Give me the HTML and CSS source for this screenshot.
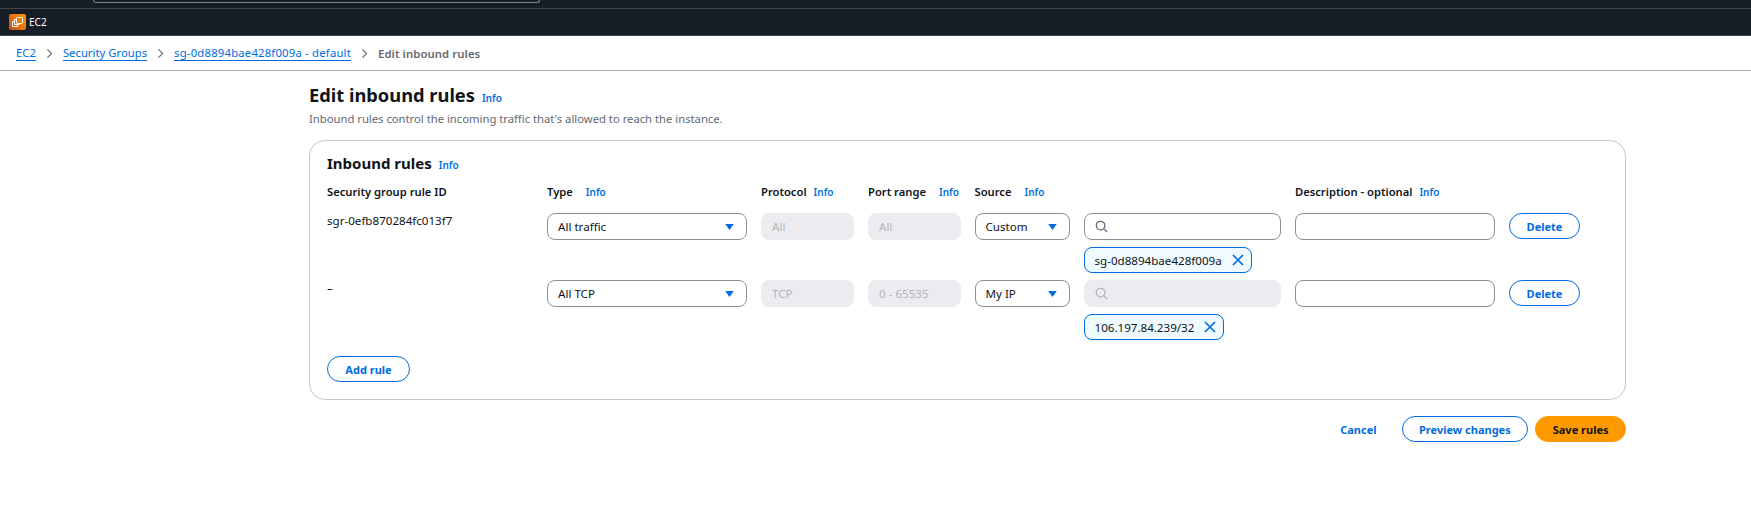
FILE: index.html
```html
<!DOCTYPE html>
<html lang="en">
<head>
    <meta charset="UTF-8">
    <title>Edit inbound rules</title>
    <link rel="stylesheet" href="styles.css">
</head>
<body>
    <div class="browser-bar">
        <div class="url-box"></div>
    </div>
    <div class="service-bar">
        <span class="service-icon">
            <svg width="17" height="16" viewBox="0 0 17 16" fill="none" stroke="#fff" stroke-width="1">
                <rect x="7.5" y="3.5" width="6" height="6" rx="1"/>
                <path d="M7.5 5.5h-2v5h5v-1"/>
                <path d="M5.5 7.5h-2v5h5v-2"/>
            </svg>
        </span>
        <span>EC2</span>
    </div>
    <nav class="crumbs">
        <a href="#">EC2</a>
        <svg class="chev" viewBox="0 0 16 16"><path d="M5 2l6 6-6 6"/></svg>
        <a href="#">Security Groups</a>
        <svg class="chev" viewBox="0 0 16 16"><path d="M5 2l6 6-6 6"/></svg>
        <a class="crumb-id" href="#">sg-0d8894bae428f009a - default</a>
        <svg class="chev" viewBox="0 0 16 16"><path d="M5 2l6 6-6 6"/></svg>
        <span class="crumb-current">Edit inbound rules</span>
    </nav>

    <main class="content">
        <div class="page-head">
            <h1>Edit inbound rules <a class="info" href="#">Info</a></h1>
            <p>Inbound rules control the incoming traffic that's allowed to reach the instance.</p>
        </div>

        <section class="panel">
            <h2>Inbound rules <a class="info" href="#">Info</a></h2>

            <div class="rule-grid labels">
                <div class="lbl">Security group rule ID</div>
                <div class="lbl wide">Type <a class="info" href="#">Info</a></div>
                <div class="lbl">Protocol <a class="info" href="#">Info</a></div>
                <div class="lbl wide">Port range <a class="info" href="#">Info</a></div>
                <div class="lbl wide">Source <a class="info" href="#">Info</a></div>
                <div></div>
                <div class="lbl">Description - optional <a class="info" href="#">Info</a></div>
                <div></div>
            </div>

            <div class="rule-grid rule">
                <div class="rule-id">sgr-0efb870284fc013f7</div>
                <div class="select"><span>All traffic</span><svg class="caret" width="9" height="6" viewBox="0 0 10 7"><path d="M0 0h10L5 7z"/></svg></div>
                <div class="field off">All</div>
                <div class="field off">All</div>
                <div class="select"><span>Custom</span><svg class="caret" width="9" height="6" viewBox="0 0 10 7"><path d="M0 0h10L5 7z"/></svg></div>
                <div class="cidr">
                    <div class="field search">
                        <svg width="13" height="13" viewBox="0 0 14 14" fill="none" stroke="#5f6b7a" stroke-width="1.4"><circle cx="6" cy="6" r="4.6"/><path d="M9.3 9.3L13 13"/></svg>
                    </div>
                    <div class="token">sg-0d8894bae428f009a <svg width="12" height="12" viewBox="0 0 12 12"><path d="M1 1l10 10M11 1L1 11"/></svg></div>
                </div>
                <div class="field"></div>
                <button class="btn">Delete</button>
            </div>

            <div class="rule-grid rule">
                <div class="rule-id">–</div>
                <div class="select"><span>All TCP</span><svg class="caret" width="9" height="6" viewBox="0 0 10 7"><path d="M0 0h10L5 7z"/></svg></div>
                <div class="field off">TCP</div>
                <div class="field off">0 - 65535</div>
                <div class="select"><span>My IP</span><svg class="caret" width="9" height="6" viewBox="0 0 10 7"><path d="M0 0h10L5 7z"/></svg></div>
                <div class="cidr">
                    <div class="field off search">
                        <svg width="13" height="13" viewBox="0 0 14 14" fill="none" stroke="#b4b4bb" stroke-width="1.4"><circle cx="6" cy="6" r="4.6"/><path d="M9.3 9.3L13 13"/></svg>
                    </div>
                    <div class="token">106.197.84.239/32 <svg width="12" height="12" viewBox="0 0 12 12"><path d="M1 1l10 10M11 1L1 11"/></svg></div>
                </div>
                <div class="field"></div>
                <button class="btn">Delete</button>
            </div>

            <button class="btn add">Add rule</button>
        </section>

        <div class="actions">
            <a class="cancel" href="#">Cancel</a>
            <button class="btn">Preview changes</button>
            <button class="btn primary">Save rules</button>
        </div>
    </main>
</body>
</html>
```

FILE: styles.css
```css
*{
    margin: 0;
    padding: 0;
    box-sizing: border-box;
}
body{
    font-family: "Noto Sans", "Open Sans", sans-serif;
    font-size: 11.6px;
    color: #0f141a;
    background: #fff;
    height: 508px;
    overflow: hidden;
}
a{
    color: #006ce0;
    text-decoration: none;
}

.browser-bar{
    height: 9px;
    background: #161d26;
    border-bottom: 1px solid #3e4248;
    padding-left: 93px;
}
.url-box{
    width: 447px;
    height: 3px;
    border: 1px solid #80868b;
    border-top: 0;
    border-radius: 0 0 6px 6px;
}
.service-bar{
    height: 27px;
    background: #161d26;
    border-bottom: 1px solid #3e4248;
    color: #fff;
    display: flex;
    align-items: center;
    gap: 3px;
    padding-left: 9px;
    font-size: 10px;
}
.service-icon{
    width: 17px;
    height: 16px;
    background: linear-gradient(45deg, #c8511b, #ff9900);
    border-radius: 2px;
    display: block;
}
.service-icon svg{
    display: block;
}

.crumbs{
    height: 35px;
    border-bottom: 1px solid #b4b4bb;
    display: flex;
    align-items: center;
    padding-left: 16px;
    font-size: 11.3px;
}
.crumbs a{
    border-bottom: 1px solid #006ce0;
    line-height: 15px;
}
.crumbs .crumb-id{
    letter-spacing: .2px;
}
.chev{
    margin: 0 8px;
    width: 11px;
    height: 11px;
    fill: none;
    stroke: #656871;
    stroke-width: 1.7;
}
.crumb-current{
    color: #656871;
    font-weight: 600;
    letter-spacing: .1px;
}

.content{
    width: 1317px;
    margin-left: 309px;
}
.page-head{
    padding-top: 10px;
}
h1{
    font-size: 18.3px;
    font-weight: 700;
    line-height: 28px;
    display: flex;
    align-items: baseline;
    gap: 7px;
}
h2{
    font-size: 15px;
    font-weight: 700;
    line-height: 22px;
    display: flex;
    align-items: baseline;
    gap: 7px;
}
.info{
    font-size: 10px;
    font-weight: 600;
}
.page-head p{
    color: #656871;
    font-size: 11.25px;
    line-height: 16px;
    margin-top: -1px;
}

.panel{
    margin-top: 13px;
    height: 260px;
    border: 1px solid #c6c6cd;
    border-radius: 16px;
    padding: 11px 17px;
}
.rule-grid{
    display: grid;
    grid-template-columns: 206px 200px 93px 92.5px 95px 197.5px 200px 71px;
    column-gap: 14px;
}
.labels{
    margin-top: 8px;
    height: 29px;
}
.lbl{
    font-size: 11.2px;
    font-weight: 600;
    line-height: 16px;
    display: flex;
    align-items: baseline;
    gap: 7px;
}
.lbl.wide{
    gap: 13px;
}
.rule{
    height: 67px;
    align-items: start;
}
.rule-id{
    line-height: 16px;
}
.select,
.field{
    height: 27px;
    border: 1px solid #8c8c94;
    border-radius: 8px;
    display: flex;
    align-items: center;
    font-size: 11.6px;
}
.select{
    justify-content: space-between;
    padding: 0 12px 0 10px;
}
.caret{
    fill: #006ce0;
}
.field.off{
    background: #ebebf0;
    border-color: #ebebf0;
    color: #b4b4bb;
    padding-left: 10px;
}
.search{
    padding-left: 10px;
}
.token{
    display: inline-flex;
    align-items: center;
    gap: 10px;
    height: 26px;
    margin-top: 7px;
    padding: 0 7px 0 10px;
    background: #f0fbff;
    border: 1px solid #006ce0;
    border-radius: 8px;
}
.token svg{
    fill: none;
    stroke: #006ce0;
    stroke-width: 1.7;
}

.btn{
    font-family: inherit;
    font-size: 11px;
    font-weight: 700;
    color: #006ce0;
    background: #fff;
    border: 1px solid #006ce0;
    border-radius: 13px;
    height: 26px;
}
.add{
    width: 83px;
    margin-top: 9px;
}
.actions{
    display: flex;
    justify-content: flex-end;
    align-items: center;
    gap: 7px;
    margin-top: 16px;
}
.cancel{
    font-size: 11px;
    font-weight: 700;
    margin-right: 18px;
}
.actions .btn{
    padding: 0 16.5px;
}
.actions .primary{
    background: #ff9900;
    border-color: #ff9900;
    color: #0f141a;
}
```
